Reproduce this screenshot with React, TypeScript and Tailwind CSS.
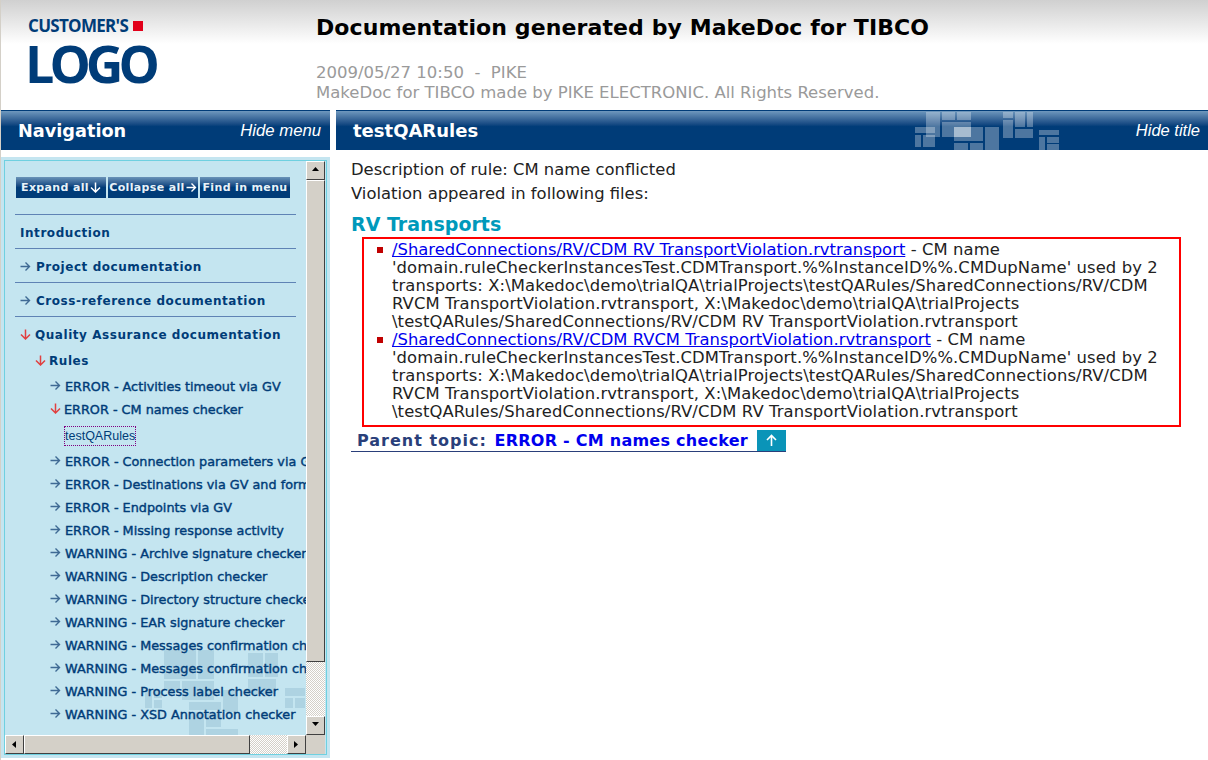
const topItems = ["Project documentation", "Cross-reference documentation"];

const ruleItems = [
  "ERROR - Connection parameters via GV",
  "ERROR - Destinations via GV and format",
  "ERROR - Endpoints via GV",
  "ERROR - Missing response activity",
  "WARNING - Archive signature checker",
  "WARNING - Description checker",
  "WARNING - Directory structure checker",
  "WARNING - EAR signature checker",
  "WARNING - Messages confirmation checker",
  "WARNING - Messages confirmation checker",
  "WARNING - Process label checker",
  "WARNING - XSD Annotation checker",
];

function ArrowRight({ color = "#3f6a94" }: { color?: string }) {
  return (
    <svg width="11" height="11" viewBox="0 0 11 11" className="-mt-[2px] shrink-0" fill="none" stroke={color} strokeWidth="1.4">
      <path d="M0.5 5.5H9.5M5.5 1.5L9.5 5.5L5.5 9.5" />
    </svg>
  );
}

function ArrowDown({ color = "#e04040" }: { color?: string }) {
  return (
    <svg width="11" height="11" viewBox="0 0 11 11" className="-mt-[2px] shrink-0" fill="none" stroke={color} strokeWidth="1.5">
      <path d="M5.5 0.5V9.5M1 5.5L5.5 10L10 5.5" />
    </svg>
  );
}

function Blocks({ className }: { className: string }) {
  return (
    <svg width="145" height="40" viewBox="0 0 145 40" className={className} fill="#ffffff" fillOpacity="0.3">
      <rect x="0" y="16" width="20" height="6" />
      <rect x="0" y="24" width="6" height="12" />
      <rect x="8" y="24" width="12" height="12" />
      <rect x="11" y="1" width="14" height="25" />
      <rect x="27" y="1" width="13" height="8" />
      <rect x="42" y="1" width="14" height="8" />
      <rect x="27" y="11" width="29" height="15" />
      <rect x="39" y="16" width="29" height="14" />
      <rect x="39" y="16" width="17" height="10" />
      <rect x="70" y="16" width="14" height="24" />
      <rect x="39" y="32" width="14" height="8" />
      <rect x="55" y="32" width="13" height="8" />
      <rect x="88" y="1" width="10" height="6" />
      <rect x="88" y="9" width="10" height="18" />
      <rect x="100" y="1" width="10" height="15" />
      <rect x="112" y="1" width="6" height="15" />
      <rect x="100" y="18" width="18" height="9" />
      <rect x="124" y="19" width="20" height="5" />
      <rect x="124" y="26" width="6" height="13" />
      <rect x="132" y="26" width="12" height="6" />
      <rect x="132" y="33" width="12" height="6" />
    </svg>
  );
}

function TreeBlocks() {
  return (
    <svg width="160" height="95" viewBox="0 0 160 95" className="absolute top-[484px] left-[140px]" fill="#8fb8cc" fillOpacity="0.4">
      <rect x="19" y="5" width="32" height="29" />
      <rect x="19" y="36" width="16" height="10" />
      <rect x="53" y="5" width="16" height="29" />
      <rect x="37" y="36" width="32" height="19" />
      <rect x="0" y="45" width="7" height="18" />
      <rect x="9" y="45" width="8" height="8" />
      <rect x="9" y="55" width="8" height="8" />
      <rect x="44" y="57" width="32" height="8" />
      <rect x="44" y="67" width="15" height="30" />
      <rect x="61" y="67" width="15" height="15" />
      <rect x="78" y="45" width="15" height="22" />
      <rect x="61" y="84" width="32" height="12" />
      <rect x="103" y="8" width="15" height="24" />
      <rect x="120" y="8" width="13" height="24" />
      <rect x="103" y="34" width="28" height="15" />
      <rect x="140" y="43" width="20" height="8" />
      <rect x="140" y="53" width="8" height="10" />
      <rect x="150" y="53" width="10" height="10" />
    </svg>
  );
}

function ScrollButton({ dir }: { dir: "up" | "down" | "left" | "right" }) {
  const points = {
    up: "0,4 7,4 3.5,0",
    down: "0,0 7,0 3.5,4",
    left: "4,0 4,7 0,3.5",
    right: "0,0 0,7 4,3.5",
  }[dir];
  return (
    <div className="flex h-[19px] w-[19px] shrink-0 items-center justify-center border border-t-white border-r-[#404040] border-b-[#404040] border-l-white bg-[#d4d0c8]">
      <svg width="7" height="7" viewBox="0 0 7 7" className={dir === "up" || dir === "down" ? "" : "ml-[2px]"}>
        <polygon points={points} fill="#000000" />
      </svg>
    </div>
  );
}

function MenuButton({ label, icon }: { label: string; icon?: React.ReactNode }) {
  return (
    <div className="flex h-[21px] w-[90px] items-center justify-center gap-[1px] bg-gradient-to-b from-[#6a93b8] via-[#003c78] to-[#003c78] pt-[2px] text-[11px] font-bold tracking-[0.35px] whitespace-nowrap text-[#e8f2f8]">
      {label}
      {icon}
    </div>
  );
}

function SubRow({ label }: { label: string }) {
  return (
    <div className="flex h-[23px] items-center gap-[4px] pl-[45px] text-[12.8px] font-normal whitespace-nowrap text-[#003c78] [-webkit-text-stroke:0.4px_#003c78]">
      <ArrowRight />
      {label}
    </div>
  );
}

function ViolationItem({ href }: { href: string }) {
  return (
    <li className="flex">
      <span className="mt-[6px] mr-[9px] h-[6px] w-[6px] shrink-0 bg-[#c00000]" />
      <p className="tracking-[0.1px]">
        <a className="tracking-normal text-[#0000ee] underline" href="#">
          {href}
        </a>{" "}
        - CM name 'domain.ruleCheckerInstancesTest.CDMTransport.%%InstanceID%%.CMDupName' used by 2 transports:
        X:\Makedoc\demo\trialQA\trialProjects\testQARules/SharedConnections/RV/CDM RVCM TransportViolation.rvtransport,
        X:\Makedoc\demo\trialQA\trialProjects<wbr />\testQARules/SharedConnections/RV/CDM RV TransportViolation.rvtransport
      </p>
    </li>
  );
}

export default function App() {
  return (
    <div className="h-[760px] w-[1208px] overflow-hidden border-l border-[#d4d0c8] bg-white font-['DejaVu_Sans',sans-serif]">
      <header className="flex h-[110px] bg-gradient-to-b from-[#d0d0d0] via-white via-[40%] to-white">
        <div className="w-[315px] pt-[15px] pl-[24px] font-['Open_Sans',sans-serif] font-bold text-[#003c78]">
          <div className="flex items-center gap-[5px] pl-[3px] text-[17px] leading-[22px] tracking-[-0.7px]">
            CUSTOMER'S
            <span className="h-[10px] w-[10px] bg-[#e2001a]" />
          </div>
          <div className="mt-[1px] text-[52px] leading-[50px] tracking-[-5px]">LOGO</div>
        </div>
        <div className="pt-[16px]">
          <h1 className="text-[22px] leading-[24px] font-bold tracking-[0.1px] text-black">Documentation generated by MakeDoc for TIBCO</h1>
          <div className="mt-[23px] text-[16.5px] leading-[20px] font-normal text-[#9a9a9a]">
            <p className="whitespace-pre">2009/05/27 10:50  -  PIKE</p>
            <p>MakeDoc for TIBCO made by PIKE ELECTRONIC. All Rights Reserved.</p>
          </div>
        </div>
      </header>

      <div className="flex h-[650px] gap-[6px]">
        <aside className="flex w-[329px] shrink-0 flex-col">
          <div className="flex h-10 items-center justify-between border-t border-[#003c78] bg-gradient-to-b from-[#6f98bd] via-[#003c78] via-[40%] to-[#003c78] pr-[9px] pl-[17px] text-white">
            <span className="pt-[2px] text-[17.7px] font-bold">Navigation</span>
            <span className="font-['Liberation_Sans',sans-serif] text-[16.7px] italic">Hide menu</span>
          </div>

          <div className="mt-[7px] h-[601px] bg-[#c4e5f0] px-[3px] pt-[3px]">
            <div className="flex h-[595px] flex-col border border-[#6fd0e0]">
              <div className="flex min-h-0 flex-1">
                <div className="relative w-[301px] overflow-hidden pt-[16px]">
                  <TreeBlocks />
                  <div className="relative">
                    <div className="ml-[11px] flex gap-[2px]">
                      <MenuButton label="Expand all" icon={<ArrowDown color="#ffffff" />} />
                      <MenuButton label="Collapse all" icon={<ArrowRight color="#ffffff" />} />
                      <MenuButton label="Find in menu" />
                    </div>

                    <div className="mt-[16px] mr-[10px] ml-[10px] text-[12px] font-bold tracking-[0.55px] text-[#003c78]">
                      <div className="flex h-[34px] items-center border-t border-[#5f83b5] pt-[3px] pl-[5px]">Introduction</div>
                      {topItems.map((item) => (
                        <div key={item} className="flex h-[34px] items-center gap-[5px] border-t border-[#5f83b5] pt-[3px] pl-[5px] whitespace-nowrap">
                          <ArrowRight />
                          {item}
                        </div>
                      ))}
                      <div className="flex h-[34px] items-center gap-[4px] border-t border-[#5f83b5] pt-[3px] pl-[5px] whitespace-nowrap">
                        <ArrowDown />
                        Quality Assurance documentation
                      </div>
                    </div>

                    <div className="mt-[2px] flex h-[18px] items-center gap-[3px] pl-[30px] text-[12px] font-bold tracking-[0.55px] text-[#003c78]">
                      <ArrowDown />
                      Rules
                    </div>
                    <div className="mt-[5px]">
                      <SubRow label="ERROR - Activities timeout via GV" />
                      <div className="flex h-[23px] items-center gap-[3px] pl-[45px] text-[12.8px] font-normal whitespace-nowrap text-[#003c78] [-webkit-text-stroke:0.4px_#003c78]">
                        <ArrowDown />
                        ERROR - CM names checker
                      </div>
                      <div className="flex h-[29px] items-center pl-[59px]">
                        <span className="border border-dotted border-[#800080] font-['Liberation_Sans',sans-serif] text-[12.5px] leading-[18px] text-[#003c78]">
                          testQARules
                        </span>
                      </div>
                      {ruleItems.map((item, i) => (
                        <SubRow key={i} label={item} />
                      ))}
                    </div>
                  </div>
                </div>

                <div className="flex w-[19px] shrink-0 flex-col bg-[repeating-conic-gradient(#d4d0c8_0_25%,#ffffff_0_50%)] bg-[length:2px_2px]">
                  <ScrollButton dir="up" />
                  <div className="h-[482px] shrink-0 border border-t-white border-r-[#404040] border-b-[#404040] border-l-white bg-[#d4d0c8]" />
                  <div className="flex-1" />
                  <ScrollButton dir="down" />
                </div>
              </div>

              <div className="flex h-[19px] shrink-0">
                <div className="flex w-[301px] bg-[repeating-conic-gradient(#d4d0c8_0_25%,#ffffff_0_50%)] bg-[length:2px_2px]">
                  <ScrollButton dir="left" />
                  <div className="w-[226px] shrink-0 border border-t-white border-r-[#404040] border-b-[#404040] border-l-white bg-[#d4d0c8]" />
                  <div className="flex-1" />
                  <ScrollButton dir="right" />
                </div>
                <div className="w-[19px] bg-[#d4d0c8]" />
              </div>
            </div>
          </div>
        </aside>

        <main className="flex min-w-0 flex-1 flex-col">
          <div className="relative flex h-10 items-center justify-between border-t border-[#003c78] bg-gradient-to-b from-[#6f98bd] via-[#003c78] via-[40%] to-[#003c78] pr-[8px] pl-[17px] text-white">
            <span className="text-[18px] font-bold">testQARules</span>
            <Blocks className="absolute top-0 left-[579px]" />
            <span className="font-['Liberation_Sans',sans-serif] text-[16.5px] italic">Hide title</span>
          </div>

          <div className="pt-[8px] pl-[15px] text-[16.4px] text-[#222222]">
            <p className="leading-[24px]">Description of rule: CM name conflicted</p>
            <p className="leading-[24px]">Violation appeared in following files:</p>
            <h2 className="mt-[6px] text-[19px] leading-[24px] font-bold text-[#0099bb]">RV Transports</h2>
            <div className="mt-[1px] ml-[11px] w-[819px] border-2 border-[#ff0000] pt-[2px] pr-[20px] pb-[4px] pl-[13px] leading-[18px]">
              <ul>
                <ViolationItem href="/SharedConnections/RV/CDM RV TransportViolation.rvtransport" />
                <ViolationItem href="/SharedConnections/RV/CDM RVCM TransportViolation.rvtransport" />
              </ul>
            </div>
            <div className="mt-[3px] flex h-[22px] w-[435px] items-center justify-between border-b border-[#2a3f7a] pl-[6px] text-[16px] font-bold">
              <span className="pt-[1px] whitespace-nowrap text-[#2a3f7a]">
                <span className="tracking-[1px]">Parent topic:</span>{" "}
                <a className="ml-[2px] tracking-[0.25px] text-[#0000ee]" href="#">ERROR - CM names checker</a>
              </span>
              <span className="flex h-[21px] w-[29px] items-center justify-center bg-[#0a94b8]">
                <svg width="13" height="13" viewBox="0 0 13 13" fill="none" stroke="#ffffff" strokeWidth="1.6">
                  <path d="M6.5 12V1.5M2 6L6.5 1.5L11 6" />
                </svg>
              </span>
            </div>
          </div>
        </main>
      </div>
    </div>
  );
}
